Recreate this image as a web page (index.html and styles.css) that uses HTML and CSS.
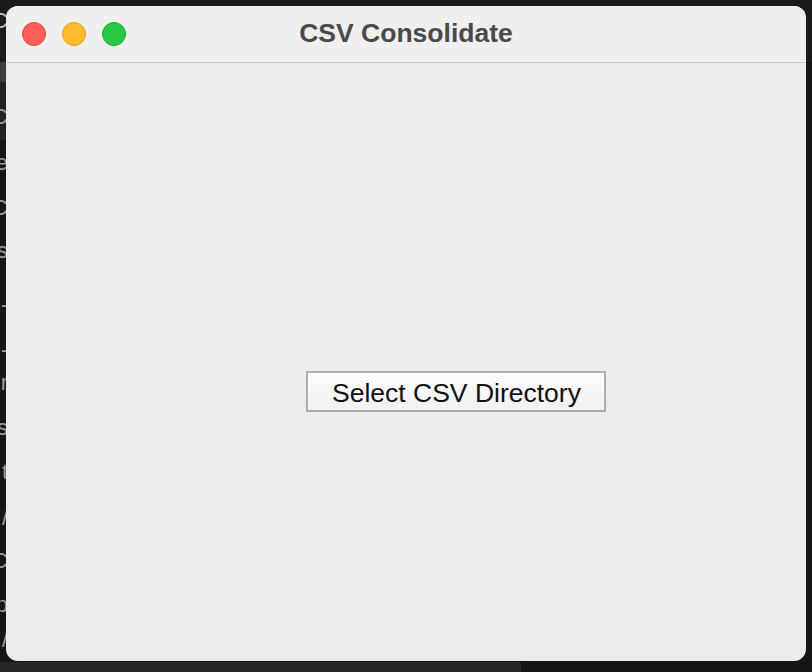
FILE: index.html
```html
<!DOCTYPE html>
<html>
<head>
<meta charset="utf-8">
<link rel="stylesheet" href="styles.css">
</head>
<body>
<div class="desktop">
  <div class="behind">
    <div class="behind-top"></div>
    <div class="behind-lines">
      <div class="bl" style="top:8px">C</div>
      <div class="bl" style="top:104px">C</div>
      <div class="bl" style="top:150px">e</div>
      <div class="bl" style="top:195px">C</div>
      <div class="bl" style="top:238px">s</div>
      <div class="bl" style="top:292px">-</div>
      <div class="bl" style="top:337px">-</div>
      <div class="bl" style="top:370px">r</div>
      <div class="bl" style="top:415px">s</div>
      <div class="bl" style="top:459px">t</div>
      <div class="bl" style="top:505px">/</div>
      <div class="bl" style="top:548px">C</div>
      <div class="bl" style="top:592px">p</div>
      <div class="bl" style="top:627px">/</div>
    </div>
    <div class="behind-block"></div>
    <div class="behind-hl"></div>
    <div class="behind-bottom"></div>
  </div>
  <div class="window">
    <div class="titlebar">
      <div class="lights">
        <span class="light red"></span>
        <span class="light yellow"></span>
        <span class="light green"></span>
      </div>
      <div class="title">CSV Consolidate</div>
    </div>
    <div class="content">
      <button class="btn">Select CSV Directory</button>
    </div>
  </div>
</div>
</body>
</html>
```
FILE: styles.css
```css
html, body {
  margin: 0;
  padding: 0;
}
body {
  width: 812px;
  height: 672px;
  overflow: hidden;
  background: #161616;
  font-family: "Liberation Sans", Arial, sans-serif;
}
.desktop {
  position: relative;
  width: 812px;
  height: 672px;
}
.behind {
  position: absolute;
  inset: 0;
}
.behind-top {
  position: absolute;
  left: 0;
  top: 0;
  width: 812px;
  height: 62px;
  background: #1b1b1b;
}
.behind-block {
  position: absolute;
  left: 0;
  top: 62px;
  width: 6px;
  height: 20px;
  background: #3c3c3c;
}
.behind-hl {
  position: absolute;
  left: 0;
  top: 82px;
  width: 6px;
  height: 58px;
  background: #232323;
}
.behind-bottom {
  position: absolute;
  left: 0;
  top: 662px;
  width: 521px;
  height: 10px;
  background: #26262b;
}
.bl {
  position: absolute;
  right: 804px;
  width: 40px;
  text-align: right;
  font-size: 22px;
  line-height: 26px;
  color: #9a9a9a;
  z-index: 1;
}
.bl:first-child {
  color: #bdbdbd;
}
.window {
  position: absolute;
  left: 6px;
  top: 6px;
  width: 800px;
  height: 655px;
  border-radius: 12px;
  overflow: hidden;
  background: #ececec;
  display: flex;
  flex-direction: column;
  z-index: 2;
}
.titlebar {
  position: relative;
  height: 56px;
  flex: none;
  background: #f0efed;
  border-bottom: 1px solid #c9c9c9;
  display: flex;
  align-items: center;
  justify-content: center;
}
.lights {
  position: absolute;
  left: 16px;
  top: 16px;
  display: flex;
  gap: 16px;
}
.light {
  width: 24px;
  height: 24px;
  border-radius: 50%;
  box-sizing: border-box;
}
.red { background: #ff5f57; border: 1px solid #e2463f; }
.yellow { background: #febc2e; border: 1px solid #e1a116; }
.green { background: #28c840; border: 1px solid #14ae2c; }
.title {
  font-weight: bold;
  font-size: 26.5px;
  color: #4a4a4a;
  margin-left: 0;
  margin-top: -1px;
}
.content {
  flex: 1;
  display: flex;
  align-items: flex-start;
  padding-left: 300px;
  padding-top: 308px;
}
.btn {
  width: 300px;
  height: 41px;
  box-sizing: border-box;
  border: 2px solid #adadad;
  background: linear-gradient(#fdfdfd, #f1f1f1);
  font-family: "Liberation Sans", Arial, sans-serif;
  font-size: 26.5px;
  line-height: 40px;
  color: #111;
  padding: 0 0 0 1px;
  margin: 0;
  border-radius: 0;
}
```
